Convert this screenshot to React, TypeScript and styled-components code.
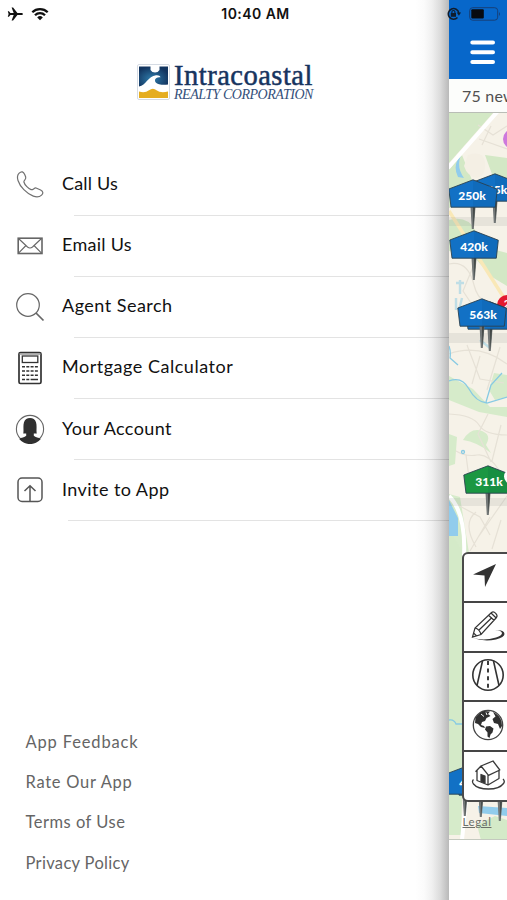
import React from "react";
import styled, { createGlobalStyle } from "styled-components";

const GlobalStyle = createGlobalStyle`
  * { box-sizing: border-box; }
  body { margin: 0; background: #fff; overflow: hidden; }
  svg { display: block; }
`;

const Screen = styled.div`
  position: relative;
  display: grid;
  grid-template-columns: 449px 58px;
  width: 507px;
  height: 900px;
  overflow: hidden;
  background: #fff;
  font-family: Lato, sans-serif;
`;

const StatusBar = styled.header`
  position: absolute;
  inset: 0 0 auto 0;
  z-index: 5;
  display: grid;
  grid-template-columns: 1fr auto 1fr;
  align-items: center;
  height: 27px;
  padding: 0 6px 0 7px;
`;

const StatusGroup = styled.div<{ $end?: boolean }>`
  display: flex;
  align-items: center;
  gap: ${(p) => (p.$end ? 8 : 7)}px;
  justify-content: ${(p) => (p.$end ? "flex-end" : "flex-start")};
`;

const Clock = styled.time`
  font: 600 14px/27px Inter, sans-serif;
  letter-spacing: 0.45px;
  color: #111;
  padding-left: 3px;
`;

const Drawer = styled.aside`
  display: flex;
  flex-direction: column;
  height: 900px;
  background: linear-gradient(
    to right,
    #fff 415px,
    #fbfbfb 424px,
    #f0f0f0 432px,
    #dcdcdc 440px,
    #b9b9b9 449px
  );
`;

const Brand = styled.div`
  display: flex;
  align-items: flex-start;
  gap: 4px;
  height: 154.6px;
  padding: 64px 0 0 137px;
`;

const BrandText = styled.div`
  display: flex;
  flex-direction: column;
  white-space: nowrap;
  font-family: "Liberation Serif", serif;
  color: #17345f;
`;

const BrandName = styled.span`
  font-size: 28.5px;
  line-height: 23px;
  letter-spacing: 0.5px;
  -webkit-text-stroke: 0.5px #17345f;
`;

const BrandSub = styled.span`
  font-size: 14px;
  line-height: 16px;
  font-style: italic;
  letter-spacing: -0.47px;
  color: #34507a;
`;

const Menu = styled.nav`
  display: flex;
  flex-direction: column;
`;

const MenuRow = styled.a`
  display: grid;
  grid-template-columns: 62px 1fr;
  align-items: center;
  height: 60.1px;
`;

const IconCell = styled.span`
  display: flex;
  padding-left: 15px;
`;

const MenuLabel = styled.span<{ $track: number }>`
  font-size: 18px;
  line-height: 24px;
  letter-spacing: ${(p) => p.$track}px;
  color: #111;
  padding-bottom: 3px;
`;

const Divider = styled.hr<{ $inset: number }>`
  width: calc(100% - ${(p) => p.$inset}px);
  height: 1px;
  margin: 0 0 0 auto;
  border: 0;
  background: rgba(0, 0, 0, 0.11);
`;

const Links = styled.footer`
  display: flex;
  flex-direction: column;
  margin-top: auto;
  padding: 0 0 17px 25.5px;
`;

const FooterLink = styled.a<{ $track: number }>`
  font-size: 16.5px;
  line-height: 40.3px;
  letter-spacing: ${(p) => p.$track}px;
  color: #656565;
`;

const MapPanel = styled.main`
  display: flex;
  flex-direction: column;
  overflow: hidden;
  background: #fff;
`;

const TopBar = styled.div`
  height: 79px;
  padding: 40px 0 0 21px;
  background: #0767ca;
`;

const Results = styled.div`
  height: 34px;
  padding-left: 13px;
  border-bottom: 1px solid #b9bdb6;
  background: #fcfdfb;
  font-size: 16px;
  line-height: 33px;
  letter-spacing: 0.2px;
  color: #505050;
  white-space: nowrap;
`;

const MapArea = styled.section`
  position: relative;
  height: 727px;
  overflow: hidden;
  border-bottom: 1px solid #c4c9bf;
`;

const PinBox = styled.div<{ $x: number; $y: number }>`
  position: absolute;
  left: ${(p) => p.$x}px;
  top: ${(p) => p.$y}px;
  width: 50px;
  height: 53px;
`;

const PinLabel = styled.span<{ $shift: number }>`
  position: absolute;
  left: ${(p) => p.$shift}px;
  top: 9px;
  width: 50px;
  font: 900 12px/16px Lato, sans-serif;
  text-align: center;
  color: #fff;
`;

const Badge = styled.span<{ $x: number; $y: number; $size: number; $color: string }>`
  position: absolute;
  left: ${(p) => p.$x}px;
  top: ${(p) => p.$y}px;
  width: ${(p) => p.$size}px;
  height: ${(p) => p.$size}px;
  border-radius: 50%;
  background: ${(p) => p.$color};
  font: 700 11px/18px Lato, sans-serif;
  text-align: center;
  color: #fff;
`;

const ToolStack = styled.div`
  position: absolute;
  left: 12.5px;
  top: 439px;
  display: flex;
  flex-direction: column;
  width: 60px;
  height: 250px;
  border: 2px solid #4a4a4a;
  border-radius: 6px;
  background: #fff;
`;

const Tool = styled.button`
  display: flex;
  align-items: center;
  height: 50px;
  padding: 0 0 2px 7px;
  border: 0;
  background: none;
  &:first-child { height: 47px; }
  & + & { border-top: 2px solid #454545; }
`;

const Legal = styled.a`
  position: absolute;
  left: 13.5px;
  top: 702px;
  font: 400 11.5px/14px Lato, sans-serif;
  letter-spacing: 0.6px;
  color: #6b6f69;
  text-decoration: underline;
`;

const Plane = () => (
  <svg width="17" height="14" viewBox="0 0 17 14">
    <path d="M16 7c0-.7-.8-1.1-2-1.1h-3.600L6.100.6H4.600l2.100 5.300H3.400L1.900 4.200H.8L1.600 7 .8 9.800h1.100l1.500-1.700h3.300l-2.100 5.300h1.500l4.300-5.300H14c1.200 0 2-.4 2-1.100z" fill="#111" />
  </svg>
);

const Wifi = () => (
  <svg width="18" height="14" viewBox="0 0 18 14" fill="none" stroke="#111" strokeWidth="2.300">
    <path d="M1.300 5.200a11 11 0 0 1 15.400 0M4 8.200a7 7 0 0 1 10 0" />
    <path d="M6.200 10.400a4 4 0 0 1 5.600 0L9 13.200z" fill="#111" stroke="none" />
  </svg>
);

const RotationLock = () => (
  <svg width="14" height="14" viewBox="0 0 14 14" fill="none" stroke="#101c2c" strokeWidth="1.500">
    <path d="M11.800 6A5.300 5.300 0 1 0 10.500 10.500" />
    <path d="M9.800 5.600h4.200l-2.100 3.200z" fill="#101c2c" stroke="none" />
    <rect x="3.800" y="6" width="5.200" height="3.800" fill="#101c2c" stroke="none" />
    <path d="M4.900 6V5a1.500 1.500 0 0 1 3 0v1" strokeWidth="1.100" />
  </svg>
);

const Battery = () => (
  <svg width="32" height="14" viewBox="0 0 32 14">
    <rect x=".7" y=".7" width="28" height="12.500" rx="3" fill="none" stroke="#173f77" />
    <rect x="2.300" y="2.300" width="12.500" height="9.300" rx="1" fill="#070b11" />
    <path d="M30 5q2 2 0 4z" fill="#173f77" />
  </svg>
);

const Logo = () => (
  <svg width="33" height="36" viewBox="0 0 33 36">
    <defs>
      <radialGradient id="sea" cx=".45" cy=".6" r=".6">
        <stop stopColor="#2f7cab" />
        <stop offset="1" stopColor="#12345f" />
      </radialGradient>
    </defs>
    <rect x=".5" y=".5" width="32" height="35" rx="1.500" fill="#fff" stroke="#d5dbe3" />
    <path d="M2 2.500h29V23H2z" fill="url(#sea)" />
    <path d="M13.500 2h9v4q-1.500 2.500-4.500 2.500T13.500 6z" fill="#fff" />
    <path d="M2 22.500C9 21.500 11 12 19 11.200q4-.3 4.500 2-4.500-.5-5.500 2.500-.5 3.300 4 4.600 4.500 1 9 .2V29H2z" fill="#fff" />
    <path d="M2 27.500q6 1.800 10-1.200 4-3 7.500 0 4 3 11.500 1.200V34H2z" fill="#e5ad20" />
  </svg>
);

const PhoneIcon = () => (
  <svg width="30" height="30" viewBox="0 0 30 30" fill="none" stroke="#707070" strokeWidth="1.200">
    <path d="M4.200 3.200C6.600.8 8.400 1.800 9.700 4.500l1 2.500c.7 2.600-2.200 3.300-1.800 5 .8 3.200 4.700 6.700 7.200 7.600 1.800.8 3-2 5-1.600l4.500 2c2.800 1.500 2.800 3.500 1 5.100-2.100 1.900-5.200 2.200-8.300 1C11.500 23.500 5 16.700 3 10.500 2 7.500 2 5.400 4.200 3.200z" />
  </svg>
);

const MailIcon = () => (
  <svg width="30" height="30" viewBox="0 0 30 30" fill="none" stroke="#666" strokeWidth="1.100">
    <rect x="3.200" y="7.200" width="23.800" height="15.300" strokeWidth="1.600" />
    <path d="M3.500 7.500l9 8.500q2.500 2 5 0l9-8.500M3.500 22.200l7.500-7.700M26.500 22.200l-7.500-7.700" />
  </svg>
);

const SearchIcon = () => (
  <svg width="30" height="30" viewBox="0 0 30 30" fill="none" stroke="#666" strokeWidth="1.200">
    <circle cx="13" cy="13" r="11.300" />
    <path d="M21 21l7.500 7.500" strokeWidth="1.700" />
  </svg>
);

const CalculatorIcon = () => (
  <svg width="30" height="34" viewBox="0 0 30 34" fill="none" stroke="#333">
    <rect x="4" y="1.500" width="22" height="31" rx="1.500" strokeWidth="1.700" />
    <path d="M4.500 3h21" stroke="#999" strokeWidth="1.500" />
    <rect x="7.300" y="5" width="15.500" height="6.500" strokeWidth="1.300" />
    <path d="M7 15.800h16M7 20h16M7 24.200h16M7 28.500h9" strokeWidth="1.500" strokeDasharray="3 1.300" />
    <path d="M16 28.500h7" strokeWidth="1.500" />
  </svg>
);

const AccountIcon = () => (
  <svg width="30" height="30" viewBox="0 0 30 30">
    <circle cx="15" cy="15" r="13.600" fill="#fff" stroke="#666" strokeWidth="1.100" />
    <path d="M8.200 19.500C9 17 7.800 12 9 8.200 10 5 12 4 15 4s5 1 6 4.200c1.200 3.800 0 8.800.8 11.300h-3v2.300c1.500 1.800 5 1.500 7 3.200a14 14 0 0 1-21.600 0c2-1.700 5.500-1.400 7-3.200v-2.300z" fill="#303030" />
  </svg>
);

const InviteIcon = () => (
  <svg width="30" height="30" viewBox="0 0 30 30" fill="none" stroke="#555" strokeWidth="1.500">
    <rect x="3" y="3" width="24" height="23.500" rx="4" />
    <path d="M15 26V11M9.500 16L15 10.700l5.500 5.300" />
  </svg>
);

const Hamburger = () => (
  <svg width="26" height="26" viewBox="0 0 26 26" stroke="#fff" strokeWidth="4" strokeLinecap="round">
    <path d="M2.300 2.600h20.700M2.300 12.300h20.700M2.300 22h20.700" />
  </svg>
);

const MapArt = () => (
  <svg width="58" height="727" viewBox="449 113 58 727" fill="none">
    <path fill="#f6f2e8" d="M449 113h58v727h-58z" />
    <path fill="#d3e8c5" d="M449 113h44l-44 50zM449 169l13-14 10 25-8 23-15 5zM485 155l22 3v31l-14-12zM449 220q18-5 26 10l17 19 15 4v33l-15-9-18-20-25-6z" />
    <path fill="#d6ebca" d="M449 376l24 13 17 18h17v10l-28-5-30-12zM494 373l13 2v22l-12 3-6-10zM463 440q8-13 19-9 10 4 4 14l5 8q-14-11-28-13zM449 434l8 3-2 27-6 2zM449 494l11 3 9 56-8 282h-12z" />
    <path fill="#d4eac8" d="M449 530l15 24v224h-15zM477 825l18-9 12 4v20h-26z" />
    <path fill="#f4efe4" d="M468 155q15-5 17 7 1 14-8 16-10-2-13-12z" />
    <path fill="#91ccec" d="M461 155q-5 12 3 23l-6-1q-6-12 3-22zM449 500l9 18v18h-9zM478 806l29 2v8l-28-3z" />
    <g stroke="#e6e1d6" strokeWidth="1.200">
      <path d="M449 264q19-4 25 21t33 17M473 267l-10 24 10 15M449 354q30-11 58 10M467 345l13 34 24 4M480 356l-8 28M500 347l-13 43M449 414q24 1 30 11t28 10M488 414l-10 20 13 28M456 451q10 6 21 4t22 15M501 425l-9 36M466 455l3 23M507 496l-28 40M490 517l-20 34M456 504l24 13 10 18M501 520l-9 29M476 512q-14 11 0 35M478 125l15 10 14-9M479 139l28 10M491 126l-9 19" />
    </g>
    <path d="M498 111l-50 57M449 496q17 17 15 60M466 800l-4 40" stroke="#fff" strokeWidth="4" />
    <path d="M449 211l57 90" stroke="#f9e8b7" strokeWidth="3.500" />
    <g stroke="#87cae3" strokeWidth="1.300">
      <path d="M449 381q13-5 20 8t18 14l20-6M486 402l5-17 11-12M449 720q5-1 7 4h6M449 346q2 6 1 12l8 7" />
      <path d="M460 280v14M456 298v12M456 283h8M462 298l-3 12M480 340l10 8" strokeWidth="2.400" opacity=".5" />
      <circle cx="463" cy="452" r="1.500" />
    </g>
    <path d="M449 217h58v9h-58zM449 333h58v10h-58zM449 498h58v8h-58z" fill="#777f7b" opacity=".12" />
    <circle cx="513" cy="139" r="10" fill="#cd79dc" />
  </svg>
);

interface PinProps {
  x: number;
  y: number;
  label?: string;
  shift?: number;
  color?: string;
}

function Pin({ x, y, label, shift = 0, color = "#1271c5" }: PinProps) {
  return (
    <PinBox $x={x} $y={y}>
      <svg width="50" height="53" viewBox="0 0 50 53">
        <path d="M22.500 28h5l-1.700 22h-2z" fill="#727777" />
        <path d="M25 28h2l-1.500 21z" fill="#3f4543" />
        <path d="M25 .8l24.300 9.400-2 18H3L.8 10z" fill={color} stroke="#2b4250" strokeWidth=".9" />
        <path d="M25 1l24 9-2 18H25z" fill="#00264b" opacity=".08" />
      </svg>
      {label && <PinLabel $shift={shift}>{label}</PinLabel>}
    </PinBox>
  );
}

const ArrowIcon = () => (
  <svg width="34" height="34" viewBox="0 0 34 34" fill="#333">
    <path d="M25 5L14 28l-.5-11.500L2 15.500z" />
  </svg>
);

const PencilIcon = () => (
  <svg width="34" height="36" viewBox="0 0 34 36" fill="none" stroke="#333" strokeWidth="1.200">
    <path d="M1.500 29l2.500-9L20.500 4.500q2-1.500 4.200.8t.8 4.200L10 26.500zM4 20q4.500 1 6 6.500M17.500 7.300l5.500 5M20 5l5.200 5M1.500 29l4-1.300-2.700-2.400M8 22L21 9.500" />
    <path d="M2 30q11 3 23-.5 6-2 6-4.500-1-3-7-3 9.500-.3 9.500 4 0 3-8.500 5.500-12 2.500-23-1.500z" fill="#333" stroke="none" />
  </svg>
);

const RoadIcon = () => (
  <svg width="34" height="34" viewBox="0 0 34 34" fill="none" stroke="#333" strokeWidth="1.600">
    <circle cx="17" cy="17" r="15.200" />
    <path d="M11.500 3L6 27.500M22.500 3L28 27.500" />
    <path d="M17 3v29" strokeWidth="1.900" strokeDasharray="4 3.600" />
  </svg>
);

const GlobeIcon = () => (
  <svg width="34" height="34" viewBox="0 0 34 34">
    <circle cx="17" cy="17" r="14.700" fill="#fff" stroke="#444" strokeWidth="1.300" />
    <path d="M4.500 10Q8 4.500 13 3l6 .5-2 2.500 2.500 2-4 2-1.500 3-3 1-1 3 3 1 1 2-4-1-3-3-3-1zM22 4q6 2.500 8.500 9l.5 5-2 3-2-5-4-1-1.500-4 3-2.500zM15 18.500l4-.5 3.500 2.500-1 4-2 2-1 3.500-2-1.500v-4l-2.500-3z" fill="#303030" />
    <path d="M10 6l3 2.500M15 4.500l1 2.500" fill="none" stroke="#fff" strokeWidth="1" />
  </svg>
);

const HouseIcon = () => (
  <svg width="36" height="36" viewBox="0 0 36 36" fill="none" stroke="#3a3a3a" strokeWidth="1.300" strokeLinejoin="round">
    <path d="M4.500 14.800L10 9l7.500 9.300 11.300-5.300L22 4 10 9M6 13.500v10L17 28l11-6.500v-8M17 18v10" />
    <path d="M10 17.500l4 1.500v7l-4-1.500z" fill="#333" />
    <path d="M2.500 22.500q-2 2 0 4.500 4 5 15 5t15-5.500q1.800-2.500-.5-4.500" />
  </svg>
);

const menuItems = [
  { label: "Call Us", icon: <PhoneIcon />, track: 0.17, inset: 74 },
  { label: "Email Us", icon: <MailIcon />, track: 0.27, inset: 74 },
  { label: "Agent Search", icon: <SearchIcon />, track: 0.48, inset: 74 },
  { label: "Mortgage Calculator", icon: <CalculatorIcon />, track: 0.52, inset: 74 },
  { label: "Your Account", icon: <AccountIcon />, track: 0.4, inset: 74 },
  { label: "Invite to App", icon: <InviteIcon />, track: 0.43, inset: 68 },
];

const footerLinks = [
  { label: "App Feedback", track: 0.85 },
  { label: "Rate Our App", track: 0.72 },
  { label: "Terms of Use", track: 0.5 },
  { label: "Privacy Policy", track: 0.33 },
];

export default function App() {
  return (
    <>
      <GlobalStyle />
      <Screen>
        <StatusBar>
          <StatusGroup><Plane /><Wifi /></StatusGroup>
          <Clock>10:40 AM</Clock>
          <StatusGroup $end><RotationLock /><Battery /></StatusGroup>
        </StatusBar>
        <Drawer>
          <Brand>
            <Logo />
            <BrandText>
              <BrandName>Intracoastal</BrandName>
              <BrandSub>REALTY CORPORATION</BrandSub>
            </BrandText>
          </Brand>
          <Menu>
            {menuItems.map((item) => (
              <React.Fragment key={item.label}>
                <MenuRow>
                  <IconCell>{item.icon}</IconCell>
                  <MenuLabel $track={item.track}>{item.label}</MenuLabel>
                </MenuRow>
                <Divider $inset={item.inset} />
              </React.Fragment>
            ))}
          </Menu>
          <Links>
            {footerLinks.map((link) => (
              <FooterLink key={link.label} $track={link.track}>{link.label}</FooterLink>
            ))}
          </Links>
        </Drawer>
        <MapPanel>
          <TopBar><Hamburger /></TopBar>
          <Results>75 new</Results>
          <MapArea>
            <MapArt />
            <Pin x={21} y={60} label="95k" shift={2} />
            <Pin x={-1} y={66} label="250k" shift={-1} />
            <Pin x={0} y={117} label="420k" />
            <Badge $x={48} $y={182} $size={20} $color="#e3192e">2</Badge>
            <Pin x={16} y={188} />
            <Pin x={8} y={185} label="563k" shift={1} />
            <Pin x={14} y={352} label="311k" shift={1} color="#1b9742" />
            <Badge $x={55} $y={356} $size={15} $color="#fff" />
            <Pin x={7} y={654} />
            <Pin x={26} y={658} />
            <Pin x={-9} y={653} label="425k" shift={8} />
            <ToolStack>
              <Tool aria-label="Locate"><ArrowIcon /></Tool>
              <Tool aria-label="Draw"><PencilIcon /></Tool>
              <Tool aria-label="Roads"><RoadIcon /></Tool>
              <Tool aria-label="Map type"><GlobeIcon /></Tool>
              <Tool aria-label="Property"><HouseIcon /></Tool>
            </ToolStack>
            <Legal>Legal</Legal>
          </MapArea>
        </MapPanel>
      </Screen>
    </>
  );
}
